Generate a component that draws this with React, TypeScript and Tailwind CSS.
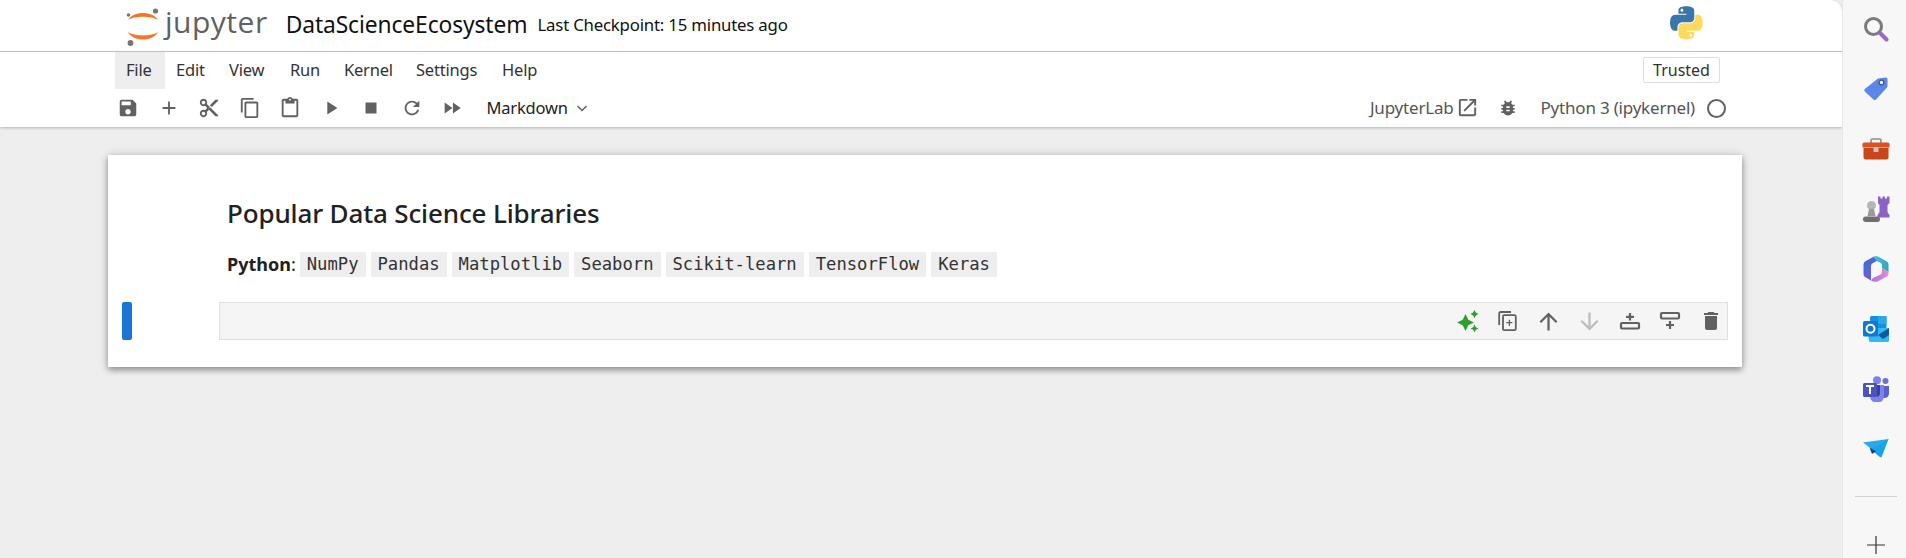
import React from "react";

const P = ({ d, s = 22, c = "#616161", className = "" }: { d: string; s?: number; c?: string; className?: string }) => (
  <svg width={s} height={s} viewBox="0 0 24 24" fill={c} className={className}>
    <path d={d} />
  </svg>
);

const icons = {
  save: "M17 3H5c-1.11 0-2 .9-2 2v14c0 1.1.89 2 2 2h14c1.1 0 2-.9 2-2V7l-4-4zm-5 16c-1.66 0-3-1.34-3-3s1.34-3 3-3 3 1.34 3 3-1.34 3-3 3zm3-10H5V5h10v4z",
  add: "M19 13h-6v6h-2v-6H5v-2h6V5h2v6h6v2z",
  cut: "M9.64 7.64c.23-.5.36-1.05.36-1.64 0-2.21-1.79-4-4-4S2 3.79 2 6s1.79 4 4 4c.59 0 1.14-.13 1.64-.36L10 12l-2.36 2.36C7.14 14.13 6.59 14 6 14c-2.21 0-4 1.79-4 4s1.79 4 4 4 4-1.79 4-4c0-.59-.13-1.14-.36-1.64L12 14l7 7h3v-1L9.64 7.64zM6 8c-1.1 0-2-.89-2-2s.9-2 2-2 2 .89 2 2-.9 2-2 2zm0 12c-1.1 0-2-.89-2-2s.9-2 2-2 2 .89 2 2-.9 2-2 2zm6-7.5c-.28 0-.5-.22-.5-.5s.22-.5.5-.5.5.22.5.5-.22.5-.5.5zM19 3l-6 6 2 2 7-7V3z",
  copy: "M16 1H4c-1.1 0-2 .9-2 2v14h2V3h12V1zm3 4H8c-1.1 0-2 .9-2 2v14c0 1.1.9 2 2 2h11c1.1 0 2-.9 2-2V7c0-1.1-.9-2-2-2zm0 16H8V7h11v14z",
  paste: "M19 2h-4.18C14.4.84 13.3 0 12 0c-1.3 0-2.4.84-2.82 2H5c-1.1 0-2 .9-2 2v16c0 1.1.9 2 2 2h14c1.1 0 2-.9 2-2V4c0-1.1-.9-2-2-2zm-7 0c.55 0 1 .45 1 1s-.45 1-1 1-1-.45-1-1 .45-1 1-1zm7 18H5V4h2v3h10V4h2v16z",
  run: "M8 5v14l11-7z",
  stop: "M6 6h12v12H6z",
  refresh: "M17.65 6.35C16.2 4.9 14.21 4 12 4c-4.42 0-7.99 3.58-7.99 8s3.57 8 7.99 8c3.73 0 6.84-2.55 7.73-6h-2.08c-.82 2.33-3.04 4-5.65 4-3.31 0-6-2.69-6-6s2.69-6 6-6c1.66 0 3.14.69 4.22 1.78L13 11h7V4l-2.35 2.35z",
  ff: "M4 18l8.5-6L4 6v12zm9-12v12l8.5-6L13 6z",
  bug: "M20 8h-2.81c-.45-.78-1.07-1.45-1.82-1.96L17 4.41 15.59 3l-2.17 2.17C12.96 5.06 12.49 5 12 5c-.49 0-.96.06-1.41.17L8.41 3 7 4.41l1.62 1.63C7.88 6.55 7.26 7.22 6.81 8H4v2h2.09c-.05.33-.09.66-.09 1v1H4v2h2v1c0 .34.04.67.09 1H4v2h2.81c1.04 1.79 2.97 3 5.19 3s4.15-1.21 5.19-3H20v-2h-2.09c.05-.33.09-.66.09-1v-1h2v-2h-2v-1c0-.34-.04-.67-.09-1H20V8zm-6 8h-4v-2h4v2zm0-4h-4v-2h4v2z",
  up: "M4 12l1.41 1.41L11 7.83V20h2V7.83l5.58 5.59L20 12l-8-8-8 8z",
  down: "M20 12l-1.41-1.41L13 16.17V4h-2v12.17l-5.58-5.59L4 12l8 8 8-8z",
  trash: "M6 19c0 1.1.9 2 2 2h8c1.1 0 2-.9 2-2V7H6v12zM19 4h-3.5l-1-1h-5l-1 1H5v2h14V4z",
  ext: "M19 19H5V5h7V3H5a2 2 0 0 0-2 2v14a2 2 0 0 0 2 2h14c1.1 0 2-.9 2-2v-7h-2v7zM14 3v2h3.59l-9.83 9.83 1.41 1.41L19 6.41V10h2V3h-7z",
};

const JupyterLogo = () => (
  <svg width="38" height="42" viewBox="0 0 38 42" className="shrink-0">
    <path d="M4 15 C9 5.500 29 5.500 34 15 C28 10.500 10 10.500 4 15 Z" fill="#f37726" />
    <path d="M4 27 C9 37 29 37 34 27 C28 31.500 10 31.500 4 27 Z" fill="#f37726" />
    <circle cx="31.500" cy="6" r="2.600" fill="#767677" />
    <circle cx="4.500" cy="10" r="1.800" fill="#767677" />
    <circle cx="6.500" cy="38" r="2.900" fill="#767677" />
  </svg>
);

const PythonLogo = () => (
  <svg width="33" height="34" viewBox="0 0 112 113">
    <path
      fill="#3a76a8"
      d="M54.9 0C50.3 0 46 .4 42.1 1.1 30.8 3.1 28.7 7.3 28.7 15v10.3h26.8v3.4H18.6C10.8 28.7 4 33.3 1.9 42.3c-2.5 10.2-2.6 16.5 0 27.1C3.8 77.3 8.3 82.9 16.1 82.9h9.2V70.7C25.3 61.8 33 54 42.1 54h26.8c7.4 0 13.4-6.1 13.4-13.6V15c0-7.3-6.1-12.7-13.4-13.9C64.3.3 59.5 0 54.9 0zM40.4 8.2c2.8 0 5 2.3 5 5.1 0 2.8-2.3 5.1-5 5.1-2.8 0-5-2.3-5-5.1 0-2.8 2.2-5.1 5-5.1z"
    />
    <path
      fill="#ffd95b"
      d="M85.6 28.7v11.9c0 9.2-7.8 17-16.7 17H42.1c-7.3 0-13.4 6.3-13.4 13.6v25.5c0 7.3 6.3 11.5 13.4 13.6 8.5 2.5 16.6 2.9 26.8 0 6.7-2 13.4-5.9 13.4-13.6V86.5H55.5v-3.4h40.2c7.8 0 10.7-5.4 13.4-13.6 2.8-8.4 2.7-16.5 0-27.3-1.9-7.7-5.6-13.5-13.4-13.5H85.6zM70.6 93.3c2.8 0 5 2.3 5 5.1 0 2.8-2.3 5.1-5 5.1-2.8 0-5-2.3-5-5.1 0-2.8 2.2-5.1 5-5.1z"
    />
  </svg>
);

const Sparkle = () => (
  <svg width="24" height="24" viewBox="0 0 24 24" fill="#2ca02c">
    <path d="M9.500 5 L12.300 10.700 L18 13.500 L12.300 16.300 L9.500 22 L6.700 16.300 L1 13.500 L6.700 10.700 Z" />
    <path d="M18.500 1 L19.900 3.600 L22.500 5 L19.900 6.400 L18.500 9 L17.100 6.400 L14.500 5 L17.100 3.600 Z" />
    <path d="M18.500 15.500 L19.800 18.200 L22.500 19.500 L19.800 20.800 L18.500 23.500 L17.200 20.800 L14.500 19.500 L17.200 18.200 Z" />
  </svg>
);

const Dup = () => (
  <svg width="22" height="22" viewBox="0 0 22 22" fill="none" stroke="#616161" strokeWidth="1.800">
    <path d="M14 2H3.500A1.300 1.300 0 0 0 2.200 3.300V15" />
    <rect x="6" y="5.200" width="12.800" height="15" rx="1.200" />
    <path d="M12.400 9.700v6M9.400 12.700h6" strokeWidth="1.300" />
  </svg>
);

const InsertAbove = () => (
  <svg width="22" height="22" viewBox="0 0 22 22" fill="none" stroke="#616161">
    <rect x="2" y="13" width="18" height="5.500" rx="1" strokeWidth="2.200" />
    <path d="M11 3v7.500M7 6.800h8" strokeWidth="2.200" />
  </svg>
);

const InsertBelow = () => (
  <svg width="22" height="22" viewBox="0 0 22 22" fill="none" stroke="#616161">
    <rect x="2" y="3" width="18" height="5.500" rx="1" strokeWidth="2.200" />
    <path d="M11 11v8M7 15h8" strokeWidth="2.200" />
  </svg>
);

const SideSearch = () => (
  <svg width="26" height="26" viewBox="0 0 26 26" fill="none">
    <circle cx="10.500" cy="10.500" r="8" stroke="#7a7a7a" strokeWidth="3" />
    <path d="M17.500 17.500l6 6" stroke="#9a66cf" strokeWidth="4" strokeLinecap="round" />
  </svg>
);
const SideTag = () => (
  <svg width="26" height="26" viewBox="0 0 26 26">
    <path d="M15 2.500 L23 1.500 A1.500 1.500 0 0 1 24.500 3 L24.500 10 A2.500 2.500 0 0 1 24 11.500 L13 23.500 A2 2 0 0 1 10.500 23.500 L1.800 15.500 A1.800 1.800 0 0 1 1.800 13 Z" fill="#5b87e6" />
    <circle cx="18.500" cy="6.500" r="2.300" fill="#fff" stroke="#3b4ea8" strokeWidth="1.200" />
  </svg>
);
const SideToolbox = () => (
  <svg width="28" height="22" viewBox="0 0 28 22">
    <path d="M9 5V2.500A1.500 1.500 0 0 1 10.500 1h7A1.500 1.500 0 0 1 19 2.500V5" fill="none" stroke="#8a8a8a" strokeWidth="1.600" />
    <path d="M0.500 6a1.500 1.500 0 0 1 1.500-1.500h24A1.500 1.500 0 0 1 27.500 6v3.500H0.500z" fill="#d9531e" />
    <path d="M1.500 10h25v9.500a2 2 0 0 1-2 2h-21a2 2 0 0 1-2-2z" fill="#c9461a" />
    <rect x="11.500" y="9" width="5" height="5" rx="0.800" fill="#c4c4c4" />
  </svg>
);
const SideChess = () => (
  <svg width="28" height="28" viewBox="0 0 28 28">
    <path d="M16 1.500h2.500v2h2v-2h2.500v2h2v-2h2.500v6.500l-2 2v7l2 3v2.500H15.500V20l2-3v-7l-1.500-2z" fill="#8a63c4" />
    <circle cx="9.500" cy="10.500" r="4.500" fill="#b5b5b5" />
    <path d="M7 14h5l1.500 7h-8z" fill="#9a9a9a" />
    <rect x="1" y="21.500" width="17" height="5.500" rx="2.700" fill="#6f6f6f" />
  </svg>
);
const SideM365 = () => (
  <svg width="26" height="28" viewBox="0 0 26 28">
    <defs>
      <linearGradient id="ma" x1="0" y1="0" x2="1" y2="1">
        <stop offset="0" stopColor="#2f6fd8" />
        <stop offset="1" stopColor="#8a5ad6" />
      </linearGradient>
      <linearGradient id="mb" x1="0" y1="0" x2="1" y2="1">
        <stop offset="0" stopColor="#3fc0e6" />
        <stop offset="1" stopColor="#2ba6a6" />
      </linearGradient>
      <linearGradient id="mc" x1="0" y1="0" x2="1" y2="0">
        <stop offset="0" stopColor="#b06fe0" />
        <stop offset="1" stopColor="#e58ad0" />
      </linearGradient>
    </defs>
    <path d="M11 1.500 L2 6.500 Q0.500 7.500 0.500 9.500 V19 Q0.500 21 2 22 L8 25.500 V11 Q8 9 10 8 L14 6 Z" fill="url(#ma)" />
    <path d="M11 1.500 Q13 .500 15 1.500 L24 6.500 Q25.500 7.500 25.500 9.500 V17 L19 13 V10 Q19 8.500 17.500 7.800 L14 6 Z" fill="url(#mb)" />
    <path d="M8 25.500 Q11 27.500 14.500 26.500 L24 21.500 Q25.500 20.500 25.500 18.500 V17 L19 13 V17 Q19 18.500 17.500 19.500 L10 23 Z" fill="url(#mc)" />
  </svg>
);
const SideOutlook = () => (
  <svg width="26" height="26" viewBox="0 0 26 26">
    <path d="M7 1.500a1.500 1.500 0 0 1 1.500-1.500H22a1.500 1.500 0 0 1 1.500 1.500V12H7z" fill="#1490df" />
    <path d="M15 0h8.500v8H15z" fill="#28a8ea" />
    <path d="M4 12h22v12.500a1.500 1.500 0 0 1-1.500 1.500h-17A1.500 1.500 0 0 1 6 24.500z" fill="#35b8f1" />
    <path d="M15 19L26 12v7l-6 4z" fill="#0a5a9c" />
    <rect x="0" y="5" width="15" height="15.500" rx="1.500" fill="#0f78d4" />
    <circle cx="7.500" cy="12.700" r="4" fill="none" stroke="#fff" strokeWidth="2" />
  </svg>
);
const SideTeams = () => (
  <svg width="26" height="26" viewBox="0 0 26 26">
    <circle cx="22.500" cy="5" r="3" fill="#6b6fd6" />
    <path d="M17 10h9v7.500a4.500 4.500 0 0 1-9 0z" fill="#5a5fcb" />
    <circle cx="14" cy="4.200" r="4" fill="#7b83eb" />
    <path d="M7 9h14v11a6.500 6.500 0 0 1-14 0z" fill="#7b83eb" />
    <rect x="0" y="7" width="14" height="14" rx="1.500" fill="#4b53bc" />
    <path d="M3 10h8M7 10v8" stroke="#fff" strokeWidth="2" />
    <path d="M14 9h3v9a4 4 0 0 1-3 3z" fill="#3d3f95" />
  </svg>
);
const SidePlane = () => (
  <svg width="26" height="20" viewBox="0 0 26 20">
    <path d="M0 3.500L25.500 0 L8 9.500z" fill="#29a9e9" />
    <path d="M25.500 0L15.500 17 L8 9.500z" fill="#0f8fdc" />
    <path d="M8 9.500 L16 17.500 L18.500 18.500 L25.500 0z" fill="#19a4ea" />
    <path d="M6.500 8.500 L9 15 L13 12.500 Z" fill="#123f7d" />
  </svg>
);

const menu: [string, string][] = [
  ["File", "w-[50px] bg-[#eeeeee]"],
  ["Edit", "w-[53px]"],
  ["View", "w-[61px]"],
  ["Run", "w-[54px]"],
  ["Kernel", "w-[72px]"],
  ["Settings", "w-[86px]"],
  ["Help", "w-[60px]"],
];

const toolbar = [icons.save, icons.add, icons.cut, icons.copy, icons.paste, icons.run, icons.stop, icons.refresh, icons.ff];
const libs = ["NumPy", "Pandas", "Matplotlib", "Seaborn", "Scikit-learn", "TensorFlow", "Keras"];

export default function App() {
  return (
    <div className="flex h-[558px] w-[1906px] overflow-hidden bg-[#f7f7f7] font-['Noto_Sans',sans-serif] text-[#212121]">
      <main className="flex h-full w-[1842px] shrink-0 flex-col bg-[#eeeeee]">
        <header className="rounded-tr-[12px] bg-white shadow-[0_1px_3px_rgba(0,0,0,0.25)]">
          <div className="flex h-[52px] items-center border-b border-[#bdbdbd] pl-[124px]">
            <JupyterLogo />
            <span className="-mt-[8px] ml-[3px] font-['Open_Sans',sans-serif] text-[30px] leading-none tracking-[0.5px] text-[#616161]">jupyter</span>
            <span className="ml-[18px] text-[22.800px] leading-none tracking-[-0.1px] text-[#111]">DataScienceEcosystem</span>
            <span className="ml-[10px] text-[16.800px] leading-none tracking-[-0.2px] text-[#111]">Last Checkpoint: 15 minutes ago</span>
            <div className="-mt-[6px] ml-[882px] flex">
              <PythonLogo />
            </div>
          </div>
          <div className="flex h-[37px] items-stretch pl-[115px]">
            {menu.map(([m, c]) => (
              <div key={m} className={`flex items-center pl-[11px] text-[16.500px] tracking-[-0.2px] text-[#333] ${c}`}>
                {m}
              </div>
            ))}
            <div className="mt-[5px] mr-[122px] ml-auto flex h-[26px] w-[77px] items-center justify-center rounded-[2px] border border-[#dddddd] text-[16px] text-[#333]">
              Trusted
            </div>
          </div>
          <div className="flex h-[38px] items-center pl-[108px]">
            {toolbar.map((d, i) => (
              <div key={i} className="flex w-[40.5px] justify-center">
                <P d={d} />
              </div>
            ))}
            <div className="ml-[14px] flex items-center text-[16.500px] tracking-[-0.2px] text-[#222]">
              Markdown
              <svg width="14" height="14" viewBox="0 0 14 14" fill="none" stroke="#616161" strokeWidth="1.500" className="ml-[7px]">
                <path d="M2.500 5l4.500 4.500L11.500 5" />
              </svg>
            </div>
            <div className="mr-[116px] ml-auto flex items-center text-[17px] tracking-[-0.2px] text-[#555]">
              <span>JupyterLab</span>
              <P d={icons.ext} s={23} className="-mt-[2px] ml-[2px]" />
              <P d={icons.bug} s={20} className="ml-[19px]" />
              <span className="ml-[23px]">Python 3 (ipykernel)</span>
              <span className="ml-[12px] block h-[19px] w-[19px] rounded-full border-2 border-[#616161]" />
            </div>
          </div>
        </header>

        <section className="mt-[28px] ml-[108px] h-[212px] w-[1634px] bg-white pt-[40px] shadow-[0_3px_6px_rgba(0,0,0,0.35),0_0_10px_rgba(0,0,0,0.15)]">
          <h1 className="ml-[119px] text-[26px] leading-[36px] font-medium tracking-[-0.15px] text-[#212121]">Popular Data Science Libraries</h1>
          <div className="mt-[21px] ml-[119px] flex h-[25px] items-center text-[18px]">
            <strong className="font-bold">Python</strong>:
            <div className="ml-[4px] flex gap-[5px]">
              {libs.map((l) => (
                <code key={l} className="flex h-[25px] items-center bg-[#eeeeee] px-[7px] font-['DejaVu_Sans_Mono',monospace] text-[17.200px] text-[#333]">
                  {l}
                </code>
              ))}
            </div>
          </div>
          <div className="mt-[25px] flex items-stretch pl-[14px]">
            <div className="h-[38px] w-[10px] rounded-[2px] bg-[#1976d2]" />
            <div className="ml-[87px] flex h-[38px] w-[1509px] items-center justify-end gap-[7.500px] border border-[#e0e0e0] bg-[#f5f5f5]">
              <div className="flex w-[33px] justify-center"><Sparkle /></div>
              <div className="flex w-[33px] justify-center"><Dup /></div>
              <div className="flex w-[33px] justify-center"><P d={icons.up} s={27} /></div>
              <div className="flex w-[33px] justify-center"><P d={icons.down} s={27} c="#bdbdbd" /></div>
              <div className="flex w-[33px] justify-center"><InsertAbove /></div>
              <div className="flex w-[33px] justify-center"><InsertBelow /></div>
              <div className="flex w-[33px] justify-center"><P d={icons.trash} s={24} /></div>
            </div>
          </div>
        </section>
      </main>

      <aside className="flex flex-1 flex-col items-center border-l border-[#e6e6e6] bg-[#f7f7f7] pl-[2px]">
        {[SideSearch, SideTag, SideToolbox, SideChess, SideM365, SideOutlook, SideTeams, SidePlane].map((I, i) => (
          <div key={i} className={`flex h-[60px] w-full items-center justify-center ${i === 0 ? "-mt-[1px]" : ""}`}>
            <I />
          </div>
        ))}
        <div className="mt-[17px] h-[1px] w-[42px] bg-[#cfcfcf]" />
        <svg width="20" height="20" viewBox="0 0 20 20" className="mt-[38px]" stroke="#333" strokeWidth="1.200">
          <path d="M10 1v18M1 10h18" />
        </svg>
      </aside>
    </div>
  );
}
